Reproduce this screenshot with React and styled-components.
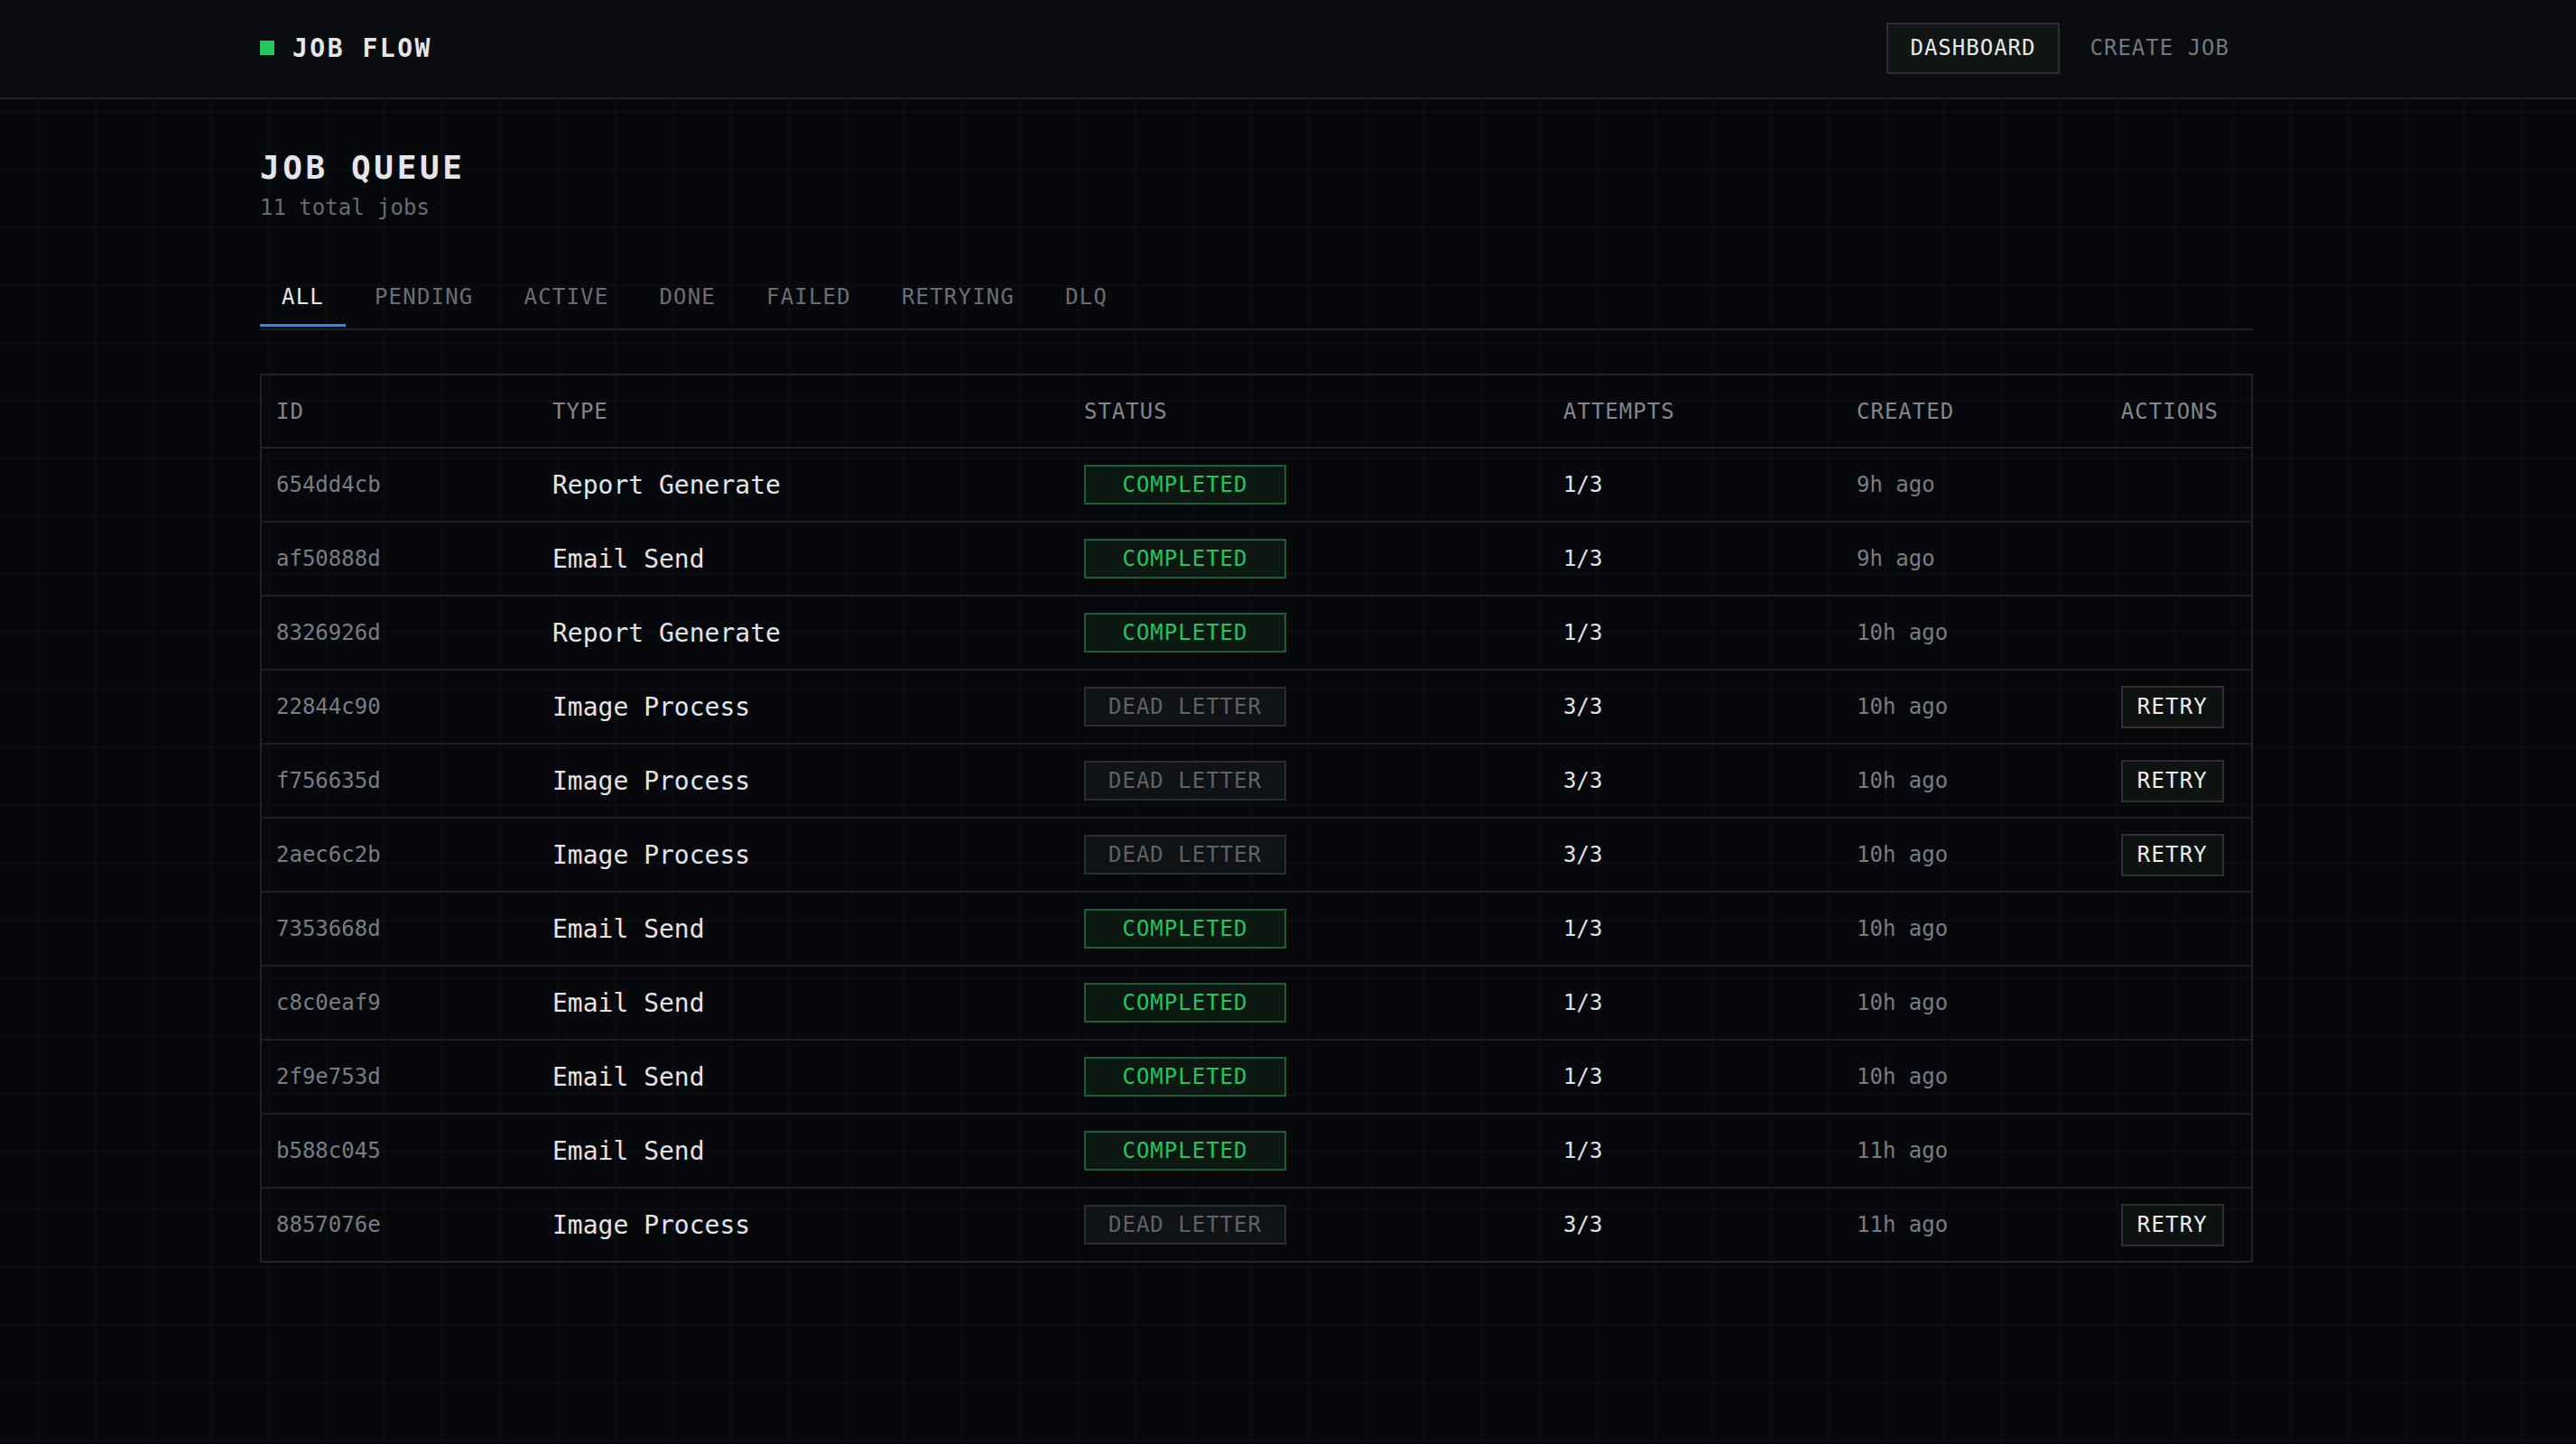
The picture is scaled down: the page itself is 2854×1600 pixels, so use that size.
import React, { useState } from 'react'
import styled, { createGlobalStyle } from 'styled-components'

const GlobalStyle = createGlobalStyle`
  * { box-sizing: border-box; }
  html, body { margin: 0; padding: 0; background: #07080b; }
  body { font-family: "DejaVu Sans Mono", "Liberation Mono", monospace; }
`

const jobs = [
  { id: '654dd4cb', type: 'Report Generate', status: 'completed', attempts: '1/3', created: '9h ago' },
  { id: 'af50888d', type: 'Email Send', status: 'completed', attempts: '1/3', created: '9h ago' },
  { id: '8326926d', type: 'Report Generate', status: 'completed', attempts: '1/3', created: '10h ago' },
  { id: '22844c90', type: 'Image Process', status: 'dead', attempts: '3/3', created: '10h ago' },
  { id: 'f756635d', type: 'Image Process', status: 'dead', attempts: '3/3', created: '10h ago' },
  { id: '2aec6c2b', type: 'Image Process', status: 'dead', attempts: '3/3', created: '10h ago' },
  { id: '7353668d', type: 'Email Send', status: 'completed', attempts: '1/3', created: '10h ago' },
  { id: 'c8c0eaf9', type: 'Email Send', status: 'completed', attempts: '1/3', created: '10h ago' },
  { id: '2f9e753d', type: 'Email Send', status: 'completed', attempts: '1/3', created: '10h ago' },
  { id: 'b588c045', type: 'Email Send', status: 'completed', attempts: '1/3', created: '11h ago' },
  { id: '8857076e', type: 'Image Process', status: 'dead', attempts: '3/3', created: '11h ago' },
]

const tabs = ['ALL', 'PENDING', 'ACTIVE', 'DONE', 'FAILED', 'RETRYING', 'DLQ']

const App = () => {
  const [tab, setTab] = useState('ALL')

  return (
    <Page>
      <GlobalStyle />
      <Header>
        <HeaderInner>
          <Brand>
            <BrandMark />
            <BrandName>JOB FLOW</BrandName>
          </Brand>
          <Nav>
            <NavButton active>DASHBOARD</NavButton>
            <NavButton>CREATE JOB</NavButton>
          </Nav>
        </HeaderInner>
      </Header>

      <Main>
        <Title>JOB QUEUE</Title>
        <Subtitle>11 total jobs</Subtitle>

        <TabBar>
          {tabs.map(t => (
            <Tab key={t} active={t === tab} onClick={() => setTab(t)}>{t}</Tab>
          ))}
        </TabBar>

        <Table>
          <HeadRow>
            <HeadCell>ID</HeadCell>
            <HeadCell>TYPE</HeadCell>
            <HeadCell>STATUS</HeadCell>
            <HeadCell>ATTEMPTS</HeadCell>
            <HeadCell>CREATED</HeadCell>
            <HeadCell right>ACTIONS</HeadCell>
          </HeadRow>
          {jobs.map(job => (
            <Row key={job.id}>
              <IdCell>{job.id}</IdCell>
              <TypeCell>{job.type}</TypeCell>
              <Cell>
                <Badge dead={job.status === 'dead'}>
                  {job.status === 'dead' ? 'DEAD LETTER' : 'COMPLETED'}
                </Badge>
              </Cell>
              <AttemptsCell>{job.attempts}</AttemptsCell>
              <IdCell>{job.created}</IdCell>
              <ActionCell>
                {job.status === 'dead' && <RetryButton>RETRY</RetryButton>}
              </ActionCell>
            </Row>
          ))}
        </Table>
      </Main>
    </Page>
  )
}

export default App

const Page = styled.div`
  min-height: 100vh;
  background-color: #07080b;
  background-image:
    linear-gradient(to right, rgba(255, 255, 255, 0.032) 1px, transparent 1px),
    linear-gradient(to bottom, rgba(255, 255, 255, 0.032) 1px, transparent 1px);
  background-size: 64px 64px;
  background-position: 41px 60px;
  color: #e4e4e8;
`

const Header = styled.header`
  height: 110px;
  padding-bottom: 2px;
  background: #0b0c0f;
  border-bottom: 2px solid #202128;
`

const HeaderInner = styled.div`
  height: 100%;
  width: 2208px;
  margin-left: 288px;
  display: flex;
  align-items: center;
  justify-content: space-between;
`

const Brand = styled.div`
  display: flex;
  align-items: center;
  gap: 20px;
`

const BrandMark = styled.span`
  width: 16px;
  height: 16px;
  background: #22c55e;
`

const BrandName = styled.span`
  font-size: 28px;
  font-weight: bold;
  letter-spacing: 2.5px;
  color: #e6e6ea;
`

const Nav = styled.nav`
  display: flex;
  gap: 8px;
`

const NavButton = styled.button`
  height: 57px;
  padding: 0 24px;
  font-family: inherit;
  font-size: 24px;
  letter-spacing: 1px;
  background: ${p => (p.active ? '#111615' : 'transparent')};
  border: 2px solid ${p => (p.active ? '#2a2d32' : 'transparent')};
  color: ${p => (p.active ? '#e8e8ec' : '#75777e')};
  cursor: pointer;
`

const Main = styled.main`
  width: 2208px;
  margin-left: 288px;
  padding: 54px 0 120px;
`

const Title = styled.h1`
  margin: 0;
  font-size: 36px;
  line-height: 44px;
  font-weight: bold;
  letter-spacing: 3.6px;
  color: #e6e6ea;
`

const Subtitle = styled.p`
  margin: 6px 0 0;
  font-size: 24px;
  line-height: 32px;
  color: #696b72;
`

const TabBar = styled.div`
  margin-top: 52px;
  display: flex;
  gap: 8px;
  padding-bottom: 2px;
  border-bottom: 2px solid #202127;
`

const Tab = styled.button`
  padding: 17px 24px 16px;
  font-family: inherit;
  font-size: 24px;
  line-height: 28px;
  letter-spacing: 1.2px;
  background: none;
  border: none;
  border-bottom: 3px solid ${p => (p.active ? '#1f8ff0' : 'transparent')};
  color: ${p => (p.active ? '#e8e8ec' : '#6c6e75')};
  cursor: pointer;
`

const Table = styled.div`
  margin-top: 48px;
  border: 2px solid #22242a;
`

const columns = '306px 589px 531px 325px 1fr 200px'

const HeadRow = styled.div`
  display: grid;
  grid-template-columns: ${columns};
  height: 81px;
  align-items: center;
  border-bottom: 2px solid #22242a;
`

const HeadCell = styled.div`
  padding: 0 ${p => (p.right ? '36px' : '16px')} 0 16px;
  text-align: ${p => (p.right ? 'right' : 'left')};
  font-size: 24px;
  letter-spacing: 1px;
  color: #85868c;
`

const Row = styled.div`
  display: grid;
  grid-template-columns: ${columns};
  height: 82px;
  align-items: center;
  border-bottom: 2px solid #1d1f24;

  &:last-child {
    border-bottom: none;
    height: 80px;
  }
`

const Cell = styled.div`
  padding: 0 16px;
  display: flex;
  align-items: center;
`

const IdCell = styled(Cell)`
  font-size: 24px;
  color: #7a7c83;
`

const TypeCell = styled(Cell)`
  font-size: 28px;
  color: #e4e4e8;
`

const AttemptsCell = styled(Cell)`
  font-size: 24px;
  color: #e2e2e6;
`

const ActionCell = styled(Cell)`
  justify-content: flex-end;
  padding-right: 30px;
`

const Badge = styled.span`
  width: 224px;
  height: 44px;
  display: inline-flex;
  align-items: center;
  justify-content: center;
  font-size: 24px;
  letter-spacing: 1px;
  border: 2px solid ${p => (p.dead ? '#2a2d32' : '#1c5e34')};
  background: ${p => (p.dead ? '#101315' : '#0c1912')};
  color: ${p => (p.dead ? '#5f6269' : '#22c55e')};
`

const RetryButton = styled.button`
  height: 47px;
  padding: 0 16px;
  font-family: inherit;
  font-size: 24px;
  letter-spacing: 1.2px;
  background: #0e1312;
  border: 2px solid #2d2f35;
  color: #ececf0;
  cursor: pointer;
`
